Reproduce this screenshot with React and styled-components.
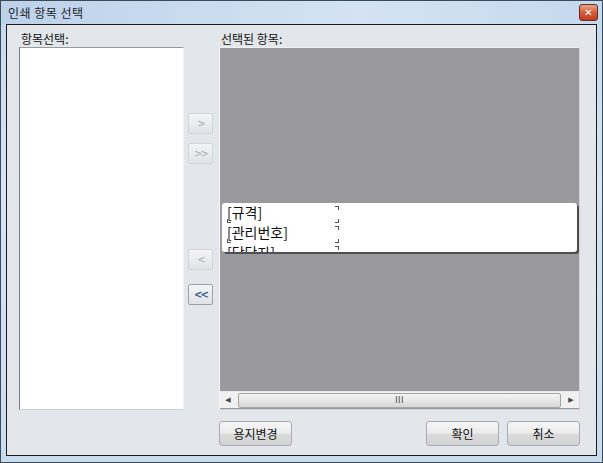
import styled, { createGlobalStyle } from "styled-components";

const Global = createGlobalStyle`
  html, body { margin: 0; padding: 0; background: #c9dcef; }
  body { font-family: "Noto Sans CJK KR", "Noto Sans", sans-serif; }
`;

const Window = styled.div`
  width: 603px;
  height: 463px;
  box-sizing: border-box;
  border: 1px solid #3d4a57;
  background: linear-gradient(180deg, #c4d8ee 0%, #d7e5f4 40%, #c9dcef 100%);
  display: flex;
  flex-direction: column;
`;

const TitleBar = styled.div`
  height: 23px;
  display: flex;
  align-items: center;
  justify-content: space-between;
  padding: 0 4px 0 7px;
  background: linear-gradient(90deg, #bcd2ea 0%, #d3e3f3 60%, #c4d9ee 100%);
`;

const Title = styled.span`
  font-size: 12px;
  color: #1e1e1e;
  letter-spacing: 0.5px;
`;

const CloseButton = styled.div`
  width: 17px;
  height: 15px;
  border: 1px solid #6e2a1a;
  border-radius: 3px;
  background: linear-gradient(180deg, #e9a58e 0%, #d45f3c 50%, #c0391c 100%);
  display: flex;
  align-items: center;
  justify-content: center;
  color: #fff;
  font-family: "DejaVu Sans", sans-serif;
  font-weight: bold;
  font-size: 10px;
  line-height: 1;
`;

const Client = styled.div`
  flex: 1;
  margin: 0 5px 6px 5px;
  border: 1px solid #1c1c1c;
  background: #e3e6eb;
  display: grid;
  grid-template-columns: 165px 25px 363px;
  grid-template-rows: 16px 363px auto;
  column-gap: 4px;
  padding: 6px 0 0 12px;
  box-sizing: border-box;
`;

const Label = styled.div`
  font-size: 12px;
  color: #111;
  padding-left: ${p => p.$indent || 2}px;
  line-height: 16px;
`;

const ListBox = styled.div`
  background: #fff;
  border-left: 1px solid #7b7b7b;
  border-top: 1px solid #9a9a9a;
  border-right: 1px solid #f2f2f2;
  border-bottom: 1px solid #d0d0d0;
`;

const Mover = styled.div`
  display: flex;
  flex-direction: column;
  padding-top: ${p => p.$top}px;
`;

const MoveGroup = styled.div`
  display: flex;
  flex-direction: column;
  gap: ${p => p.$gap}px;
  margin-top: ${p => p.$mt || 0}px;
`;

const SideButton = styled.div`
  width: 25px;
  height: 21px;
  box-sizing: border-box;
  border: 1px solid #d2d5da;
  border-radius: 2px;
  background: linear-gradient(180deg, #f3f4f6 0%, #eaecef 50%, #e0e3e7 100%);
  display: flex;
  align-items: center;
  justify-content: center;
  font-family: "DejaVu Sans", sans-serif;
  font-size: 10px;
  color: ${p => (p.$active ? "#3f5f8c" : "#a8acb2")};
  letter-spacing: -2px;
  ${p => p.$active && "border-color: #9aa3ad; font-weight: bold;"}
`;

const RightPanel = styled.div`
  margin-left: 2px;
  background: #9a9a9e;
  border-left: 1px solid #f6f6f6;
  border-top: 1px solid #f0f0f0;
  border-right: 1px solid #d4d4d4;
  border-bottom: 1px solid #d4d4d4;
  display: flex;
  flex-direction: column;
`;

const Canvas = styled.div`
  flex: 1;
  padding: 155px 2px 0 2px;
`;

const Card = styled.div`
  height: 49px;
  overflow: hidden;
  background: #fff;
  border-radius: 3px;
  box-shadow: 2px 2px 0 #4e4e4e;
  padding: 0 0 0 5px;
  box-sizing: border-box;
`;

const Field = styled.div`
  position: relative;
  width: 112px;
  height: 20px;
  font-size: 14px;
  line-height: 19px;
  color: #111;
  &::before, &::after {
    content: "";
    position: absolute;
    width: 3px;
    height: 3px;
  }
  &::before {
    right: 0;
    top: 3px;
    border-top: 1px solid #555;
    border-right: 1px solid #555;
  }
  &::after {
    right: 0;
    bottom: 0;
    border-bottom: 1px solid #555;
    border-right: 1px solid #555;
  }
`;

const BottomLeft = styled.span`
  position: absolute;
  left: 0;
  bottom: 0;
  width: 3px;
  height: 3px;
  border-left: 1px solid #555;
  border-bottom: 1px solid #555;
`;

const ScrollBar = styled.div`
  height: 16px;
  margin: 0 0 1px 0;
  background: #f0f0f0;
  border-top: 1px solid #e8e8e8;
  display: flex;
  align-items: center;
  padding: 0 4px;
  gap: 6px;
`;

const Arrow = styled.span`
  font-size: 7px;
  color: #444;
  font-family: "DejaVu Sans", sans-serif;
  width: 8px;
  text-align: center;
`;

const Thumb = styled.div`
  flex: 1;
  height: 13px;
  border: 1px solid #a6a6a6;
  border-radius: 2px;
  background: linear-gradient(180deg, #f4f4f4 0%, #e6e6e6 50%, #d6d6d6 100%);
  display: flex;
  align-items: center;
  justify-content: center;
  font-family: "DejaVu Sans", sans-serif;
  font-size: 8px;
  color: #444;
  letter-spacing: 0.5px;
`;

const Footer = styled.div`
  grid-column: 3;
  margin-left: 2px;
  padding-top: 11px;
  display: flex;
  align-items: flex-start;
`;

const Button = styled.div`
  width: 74px;
  height: 25px;
  box-sizing: border-box;
  border: 1px solid #a9acb1;
  border-radius: 3px;
  background: linear-gradient(180deg, #f6f6f6 0%, #ececec 48%, #dcdcdc 52%, #d2d2d2 100%);
  display: flex;
  align-items: center;
  justify-content: center;
  font-size: 12px;
  color: #111;
  margin-left: ${p => p.$ml || 0}px;
`;

const fields = ["[규격]", "[관리번호]", "[담당자]"];

export default function App() {
  return (
    <>
      <Global />
      <Window>
        <TitleBar>
          <Title>인쇄 항목 선택</Title>
          <CloseButton>✕</CloseButton>
        </TitleBar>
        <Client>
          <Label>항목선택:</Label>
          <div />
          <Label $indent={4}>선택된 항목:</Label>

          <ListBox />
          <Mover $top={66}>
            <MoveGroup $gap={9}>
              <SideButton>&gt;</SideButton>
              <SideButton>&gt;&gt;</SideButton>
            </MoveGroup>
            <MoveGroup $gap={14} $mt={85}>
              <SideButton>&lt;</SideButton>
              <SideButton $active>&lt;&lt;</SideButton>
            </MoveGroup>
          </Mover>
          <RightPanel>
            <Canvas>
              <Card>
                {fields.map(f => (
                  <Field key={f}>
                    {f}
                    <BottomLeft />
                  </Field>
                ))}
              </Card>
            </Canvas>
            <ScrollBar>
              <Arrow>◀</Arrow>
              <Thumb>III</Thumb>
              <Arrow>▶</Arrow>
            </ScrollBar>
          </RightPanel>

          <Footer>
            <Button>용지변경</Button>
            <Button $ml={134}>확인</Button>
            <Button $ml={8}>취소</Button>
          </Footer>
        </Client>
      </Window>
    </>
  );
}
